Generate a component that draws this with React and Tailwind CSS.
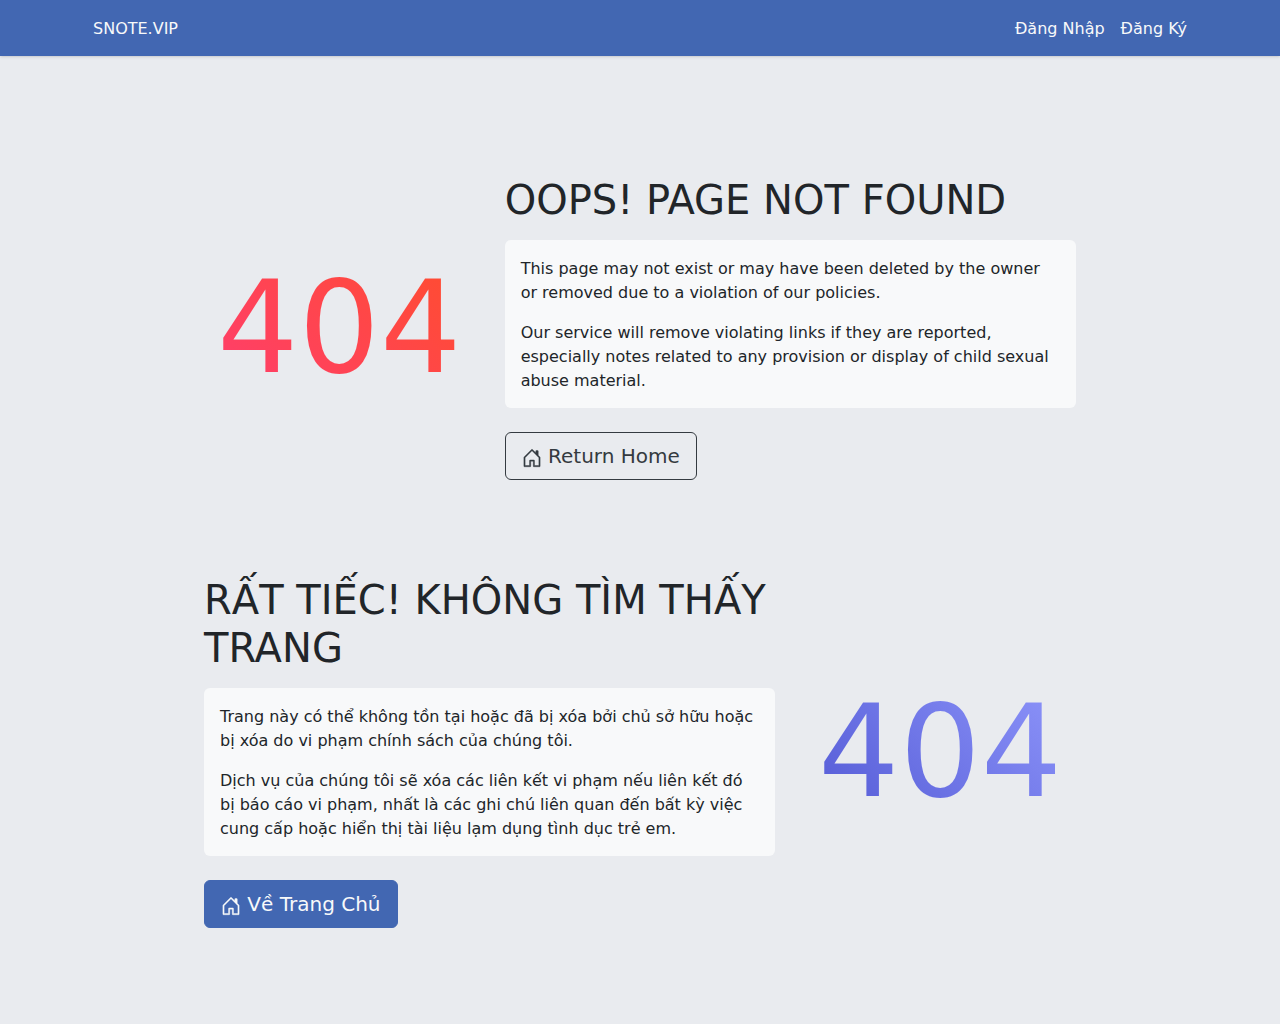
function HouseIcon() {
  return (
    <svg width="20" height="20" viewBox="0 0 16 16" fill="currentColor" stroke="currentColor" strokeWidth="0.3" className="inline-block align-[-0.25em]">
      <path d="M8.354 1.146a.5.5 0 0 0-.708 0l-6 6A.5.5 0 0 0 1.5 7.5v7a.5.5 0 0 0 .5.5h4.5a.5.5 0 0 0 .5-.5v-4h2v4a.5.5 0 0 0 .5.5H14a.5.5 0 0 0 .5-.5v-7a.5.5 0 0 0-.146-.354L13 5.793V2.5a.5.5 0 0 0-.5-.5h-1a.5.5 0 0 0-.5.5v1.293L8.354 1.146zM2.5 14V7.707l5.5-5.5 5.5 5.5V14H10v-4a.5.5 0 0 0-.5-.5h-3a.5.5 0 0 0-.5.5v4H2.5z" />
    </svg>
  );
}

export default function App() {
  return (
    <div className="min-h-[1024px] bg-[#e9ebef] font-['DejaVu_Sans',sans-serif] text-base leading-6 text-[#212529]">
      <nav className="flex h-14 items-center justify-between bg-[#4267b2] px-[93px] pt-0.5 text-[#f8f9fa] shadow-sm">
        <a href="#">SNOTE.VIP</a>
        <div className="flex gap-4">
          <a href="#">Đăng Nhập</a>
          <a href="#">Đăng Ký</a>
        </div>
      </nav>

      <main className="mx-auto w-[872px] pt-[120px]">
        <section className="grid grid-cols-[300.67px_571.33px]">
          <div className="flex items-center pl-[13px]">
            <span className="bg-[linear-gradient(45deg,#ff3d6f,#ff4d2d)] bg-clip-text text-[128px] leading-[1.2] text-transparent">
              404
            </span>
          </div>
          <div>
            <h1 className="mb-4 text-[40px] leading-[48px]">OOPS! PAGE NOT FOUND</h1>
            <div className="rounded-md bg-[#f8f9fa] px-4 pb-[15px] pt-[17px]">
              <p className="mb-4">
                This page may not exist or may have been deleted by the owner or removed due to a violation of our policies.
              </p>
              <p>
                Our service will remove violating links if they are reported, especially notes related to any provision or display of child sexual abuse material.
              </p>
            </div>
            <a
              href="#"
              className="mt-6 inline-block rounded-md border border-[#343a40] px-4 py-2 text-xl leading-[30px] text-[#343a40]"
            >
              <HouseIcon /> Return Home
            </a>
          </div>
        </section>

        <section className="mt-24 grid grid-cols-[571.33px_300.67px]">
          <div>
            <h1 className="mb-4 text-[40px] leading-[48px]">RẤT TIẾC! KHÔNG TÌM THẤY TRANG</h1>
            <div className="rounded-md bg-[#f8f9fa] px-4 pb-[15px] pt-[17px]">
              <p className="mb-4">
                Trang này có thể không tồn tại hoặc đã bị xóa bởi chủ sở hữu hoặc bị xóa do vi phạm chính sách của chúng tôi.
              </p>
              <p>
                Dịch vụ của chúng tôi sẽ xóa các liên kết vi phạm nếu liên kết đó bị báo cáo vi phạm, nhất là các ghi chú liên quan đến bất kỳ việc cung cấp hoặc hiển thị tài liệu lạm dụng tình dục trẻ em.
              </p>
            </div>
            <a
              href="#"
              className="mt-6 inline-block rounded-md border border-[#4267b2] bg-[#4267b2] px-4 py-2 text-xl leading-[30px] text-[#f8f9fa]"
            >
              <HouseIcon /> Về Trang Chủ
            </a>
          </div>
          <div className="flex items-center pl-[42.67px]">
            <span className="bg-[linear-gradient(45deg,#5158d4,#8f96fb)] bg-clip-text text-[128px] leading-[1.2] text-transparent">
              404
            </span>
          </div>
        </section>
      </main>
    </div>
  );
}
